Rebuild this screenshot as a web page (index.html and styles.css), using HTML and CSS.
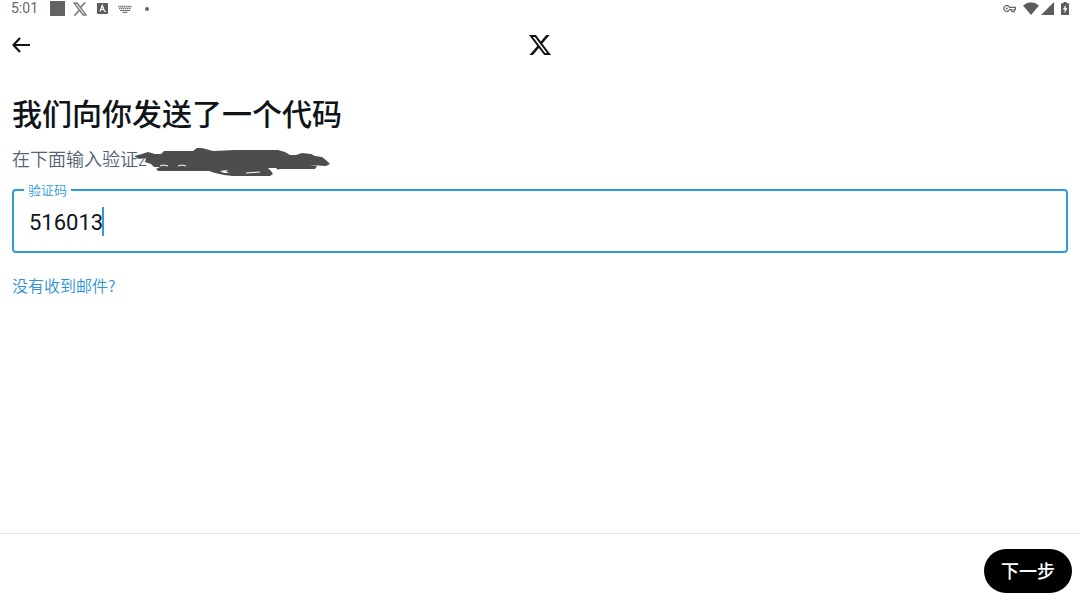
FILE: index.html
```html
<!doctype html>
<html lang="zh-CN">
<head>
	<meta charset="UTF-8">
	<meta name="viewport" content="width=device-width, initial-scale=1">
	<title>验证码</title>
	<link rel="stylesheet" href="styles.css">
</head>
<body>
	<div class="status">
		<span class="time">5:01</span>
		<div class="notices">
			<i class="square"></i>
			<svg width="14" height="14" viewBox="0 0 24 24"><path fill="#777" stroke="#777" stroke-width=".6" fill-rule="evenodd" d="M.5 1h7.200l5.100 6.800L18.900 1H22l-7.700 8.700L24 23h-7.300l-5.600-7.600L4.500 23H1.300l8.300-9.500zM4 3l13.800 18h2.500L6.700 3z"/></svg>
			<svg width="11" height="11" viewBox="0 0 11 11"><rect width="11" height="11" rx="1" fill="#5c5c5c"/><path d="M3 8.500l2.300-6 2.300 6M3.800 6.500h3M8 8.500h1" fill="none" stroke="#fff" stroke-width="1.200"/></svg>
			<svg width="14" height="8" viewBox="0 0 14 8"><path d="M0 1.500h14M1 3.500h12" stroke="#777" stroke-width="1.400" stroke-dasharray="1.500 .5"/><path d="M2 5.500h10M4.500 7.300h5" stroke="#777" stroke-width="1.200"/></svg>
			<i class="dot"></i>
		</div>
		<div class="system">
			<svg width="13" height="9" viewBox="0 0 14 9"><path d="M7 3.200A3.200 3.200 0 1 0 7 5.800h2.500v2h2.500v-2h1.300V3.200z" fill="none" stroke="#666" stroke-width="1.300"/><circle cx="4" cy="4.500" r="1.100" fill="#666"/></svg>
			<svg class="wifi" width="16" height="13" viewBox="0 0 16 13"><path d="M0 3.500Q8-3 16 3.500L8 13z" fill="#5c5c5c"/></svg>
			<svg width="13" height="13" viewBox="0 0 13 13"><path d="M13 0v13H0z" fill="#5c5c5c"/></svg>
			<svg class="battery" width="8" height="13" viewBox="0 0 8 13"><path d="M2.500 0h3v1.200H8V13H0V1.200h2.500z" fill="#5c5c5c"/><path d="M4.800 2.800L1.800 7.500h1.800v3.700l2.800-4.900H4.600z" fill="#fff"/></svg>
		</div>
	</div>

	<header class="header">
		<button type="button" class="back" aria-label="返回">
			<svg width="18" height="16" viewBox="0 0 18 16"><path d="M8 1L1.500 8 8 15M1.500 8H18" fill="none" stroke="#0f1419" stroke-width="2.200"/></svg>
		</button>
		<svg class="logo" width="22" height="20" viewBox="0 0 22 20"><path fill="#0f1419" fill-rule="evenodd" d="M17.300 0h3.400l-7.400 8.500L22 20h-6.800l-5.300-7L3.800 20H.4l7.900-9.100L0 0h7l4.800 6.400zM16.100 18H18L5.900 1.900h-2z"/></svg>
	</header>

	<main class="content">
		<h1>我们向你发送了一个代码</h1>
		<p class="intro">在下面输入验证z
			<svg class="scribble" width="197" height="30" viewBox="0 0 197 30">
				<path fill="#4d4d4d" d="M0 9L8 7 14 5 21 7 27 7 30 4 59 4 63 1 68 1 79 4 101 3 144 3 151 5 156 8 162 8 168 6 177 7 181 9 188 10 193 14 196 17 192 19 175 18 183 19 181 22 145 22 144 23 142 21 134 21 137 24 139 27 136 29 99 29 90 28 81 26 75 24 24 24 22 22 26 20 20 20 17 17 11 15 12 11 5 12z"/>
				<path d="M26 19l3-1 5 1M44 19q4-2 8 0M112 26l14-1" fill="none" stroke="#fff"/>
				<path d="M86 24l8-1-2 2 4 1-6 0z" fill="#fff"/>
			</svg>
		</p>
		<div class="field">
			<label for="code">验证码</label>
			<input id="code" type="text" inputmode="numeric" value="516013">
			<span class="caret"></span>
		</div>
		<a class="resend" href="#">没有收到邮件?</a>
	</main>

	<footer class="footer">
		<button type="button" class="next">下一步</button>
	</footer>
</body>
</html>
```
FILE: styles.css
```css
*{margin:0; padding:0; box-sizing:border-box;}
body{
	display:flex;
	flex-direction:column;
	min-height:100vh;
	background:#fff;
	color:#0f1419;
	font-family:Roboto,"Noto Sans CJK SC",sans-serif;
}
svg{display:block;}
button,input{font-family:inherit; border:none; background:none;}

/*状态栏*/
.status{
	display:flex;
	align-items:center;
	height:17px;
	padding:0 11px;
}
.time{
	font-size:14px;
	line-height:17px;
	color:#666;
}
.notices{
	display:flex;
	align-items:center;
	gap:10px;
	margin-left:12px;
}
.square{
	width:15px;
	height:15px;
	margin-right:-2px;
	background:#636363;
}
.dot{
	width:4px;
	height:4px;
	margin-left:3px;
	border-radius:50%;
	background:#666;
}
.system{
	display:flex;
	align-items:center;
	gap:2px;
	margin-left:auto;
}
.wifi{margin-left:5px;}
.battery{margin-left:5px;}

/*顶栏*/
.header{
	display:grid;
	grid-template-columns:1fr auto 1fr;
	align-items:center;
	height:56px;
	padding:0 12px;
}
.back{
	width:18px;
	height:18px;
	cursor:pointer;
}

.content{
	flex:1;
	padding:20px 12px;
}
h1{
	font-size:30px;
	line-height:44px;
	font-weight:500;
}
.intro{
	position:relative;
	margin-top:8px;
	font-size:18px;
	line-height:30px;
	font-weight:350;
	color:#536471;
}
.scribble{
	position:absolute;
	left:122px;
	top:2px;
}

/*输入框*/
.field{
	position:relative;
	margin-top:14px;
	border:2px solid #2d9bde;
	border-radius:4px;
}
.field label{
	position:absolute;
	left:10px;
	top:-9px;
	padding:0 4px;
	background:#fff;
	font-size:13px;
	line-height:18px;
	font-weight:350;
	color:#2d9bde;
}
.field input{
	display:block;
	width:100%;
	height:60px;
	padding:2px 15px 0;
	font-size:22px;
	color:#0f1419;
	outline:none;
}
.caret{
	position:absolute;
	left:88px;
	top:16px;
	width:2px;
	height:29px;
	background:#2d9bde;
}
.resend{
	display:inline-block;
	margin-top:20px;
	font-family:"Noto Sans CJK SC",sans-serif;
	font-size:16px;
	line-height:24px;
	font-weight:350;
	color:#2d93d6;
	text-decoration:none;
}

.footer{
	display:flex;
	justify-content:flex-end;
	padding:15px 8px 7px;
	border-top:1px solid #e1e4e6;
}
.next{
	height:44px;
	padding:0 17px 2px;
	border-radius:22px;
	background:#000;
	color:#fff;
	font-size:18px;
	font-weight:500;
	cursor:pointer;
}
```
